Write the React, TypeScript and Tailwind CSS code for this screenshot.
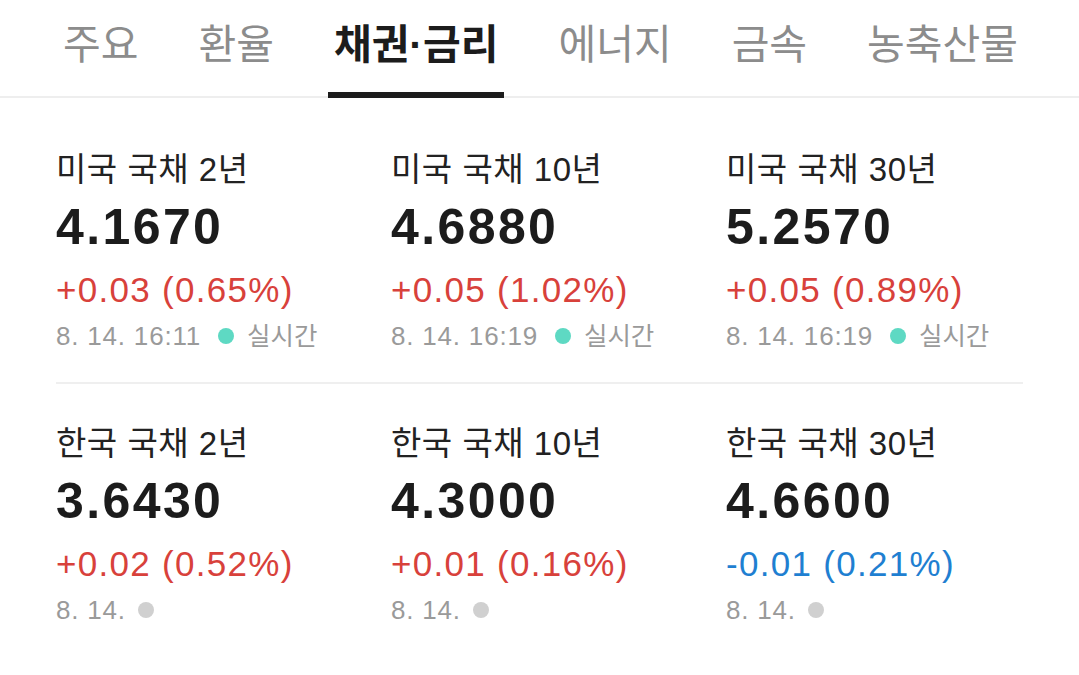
const tabs = ["주요", "환율", "채권·금리", "에너지", "금속", "농축산물"];

type Bond = {
  name: string;
  price: string;
  change: string;
  up: boolean;
  time: string;
  live: boolean;
};

const rows: Bond[][] = [
  [
    { name: "미국 국채 2년", price: "4.1670", change: "+0.03 (0.65%)", up: true, time: "8. 14. 16:11", live: true },
    { name: "미국 국채 10년", price: "4.6880", change: "+0.05 (1.02%)", up: true, time: "8. 14. 16:19", live: true },
    { name: "미국 국채 30년", price: "5.2570", change: "+0.05 (0.89%)", up: true, time: "8. 14. 16:19", live: true },
  ],
  [
    { name: "한국 국채 2년", price: "3.6430", change: "+0.02 (0.52%)", up: true, time: "8. 14.", live: false },
    { name: "한국 국채 10년", price: "4.3000", change: "+0.01 (0.16%)", up: true, time: "8. 14.", live: false },
    { name: "한국 국채 30년", price: "4.6600", change: "-0.01 (0.21%)", up: false, time: "8. 14.", live: false },
  ],
];

function BondCard({ b }: { b: Bond }) {
  return (
    <div className="flex flex-col">
      <div className="h-[40px] leading-[40px] text-[33px] tracking-[0.5px] text-[#222222] whitespace-nowrap">{b.name}</div>
      <div className="mt-[9px] h-[56px] leading-[56px] text-[50px] font-bold tracking-[2.4px] text-[#1c1c1c]">{b.price}</div>
      <div
        className={
          "mt-[13px] h-[44px] leading-[44px] text-[35px] tracking-[1.3px] whitespace-nowrap " +
          (b.up ? "text-[#d8413b]" : "text-[#1f7fd1]")
        }
      >
        {b.change}
      </div>
      <div className="mt-[7px] h-[34px] flex items-center text-[26px] text-[#9a9a9a] whitespace-nowrap">
        <span className="leading-[34px] tracking-[0.8px]">{b.time}</span>
        <span
          className={
            "w-[16px] h-[16px] rounded-full " +
            (b.live ? "ml-[17px] bg-[#5ed9c3]" : "ml-[12px] bg-[#d0d0d0]")
          }
        />
        {b.live && <span className="ml-[13px] text-[25.5px] leading-[34px]">실시간</span>}
      </div>
    </div>
  );
}

export default function App() {
  return (
    <div
      className="w-[1079px] h-[675px] bg-white overflow-hidden"
      style={{ fontFamily: "'Liberation Sans', 'Noto Sans CJK KR', sans-serif" }}
    >
      <nav className="flex h-[98px] border-b-2 border-[#eeeeee] pl-[57px] gap-[48px]">
        {tabs.map((t, i) => (
          <div
            key={t}
            className={
              "h-[98px] -mb-[2px] px-[6px] flex items-center border-b-[6px] text-[41px] whitespace-nowrap " +
              (i === 2 ? "border-[#1c1c1c] text-[#1c1c1c] font-bold" : "border-transparent text-[#8c8c8c]")
            }
          >
            {t}
          </div>
        ))}
      </nav>

      <div className="px-[56px]">
        <div className="grid grid-cols-[335px_335px_1fr] pt-[52px] pb-[29px] border-b-2 border-[#efefef]">
          {rows[0].map((b) => (
            <BondCard key={b.name} b={b} />
          ))}
        </div>
        <div className="grid grid-cols-[335px_335px_1fr] pt-[40px]">
          {rows[1].map((b) => (
            <BondCard key={b.name} b={b} />
          ))}
        </div>
      </div>
    </div>
  );
}
